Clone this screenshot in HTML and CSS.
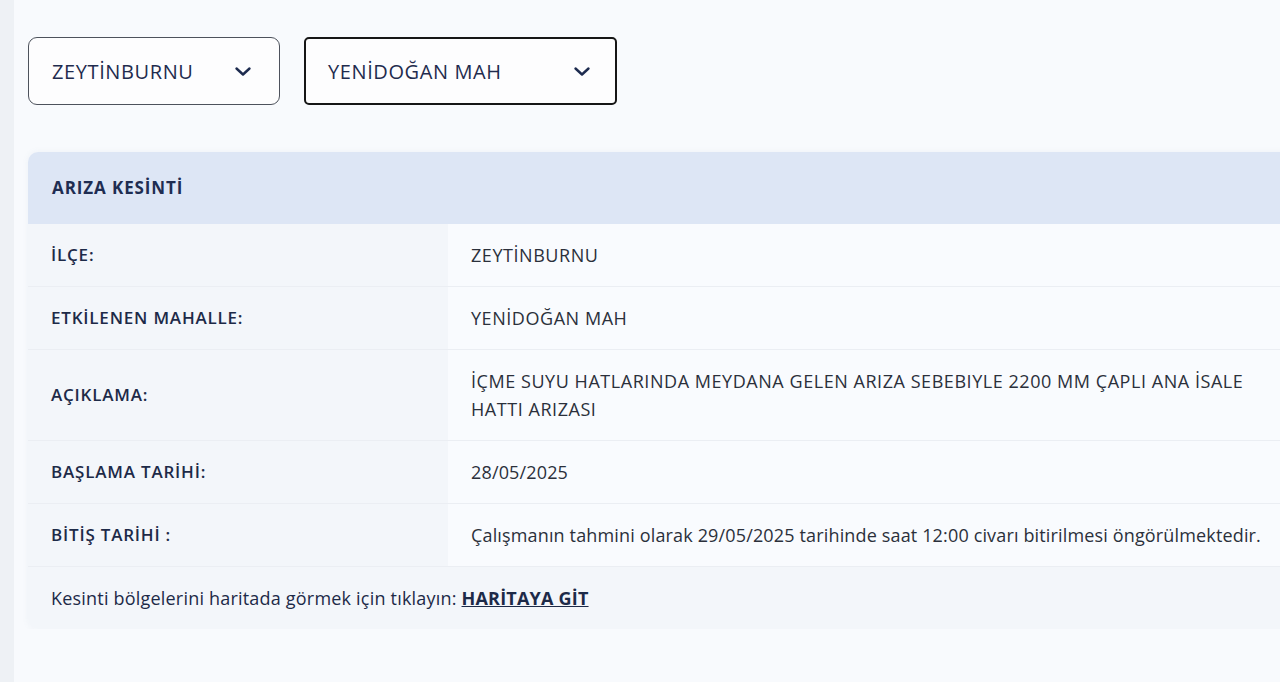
FILE: index.html
```html
<!DOCTYPE html>
<html lang="tr">
<head>
<meta charset="UTF-8">
<title>Arıza Kesinti</title>
<link rel="stylesheet" href="styles.css">
</head>
<body>
<div class="page">

  <div class="filters">
    <div class="select select-district">
      <span>ZEYTİNBURNU</span>
      <svg class="chevron" width="18" height="11" viewBox="0 0 18 11"><path d="M2.5 2.5l6.5 6 6.5-6" fill="none" stroke="#1d2b4f" stroke-width="2.4" stroke-linecap="round" stroke-linejoin="round"/></svg>
    </div>
    <div class="select select-area">
      <span>YENİDOĞAN MAH</span>
      <svg class="chevron" width="18" height="11" viewBox="0 0 18 11"><path d="M2.5 2.5l6.5 6 6.5-6" fill="none" stroke="#1d2b4f" stroke-width="2.4" stroke-linecap="round" stroke-linejoin="round"/></svg>
    </div>
  </div>

  <div class="card">
    <div class="card-head">ARIZA KESİNTİ</div>
    <div class="row">
      <div class="label">İLÇE:</div>
      <div class="value caps">ZEYTİNBURNU</div>
    </div>
    <div class="row">
      <div class="label">ETKİLENEN MAHALLE:</div>
      <div class="value caps">YENİDOĞAN MAH</div>
    </div>
    <div class="row">
      <div class="label">AÇIKLAMA:</div>
      <div class="value caps">İÇME SUYU HATLARINDA MEYDANA GELEN ARIZA SEBEBIYLE 2200 MM ÇAPLI ANA İSALE<br>HATTI ARIZASI</div>
    </div>
    <div class="row">
      <div class="label">BAŞLAMA TARİHİ:</div>
      <div class="value">28/05/2025</div>
    </div>
    <div class="row">
      <div class="label">BİTİŞ TARİHİ :</div>
      <div class="value">Çalışmanın tahmini olarak 29/05/2025 tarihinde saat 12:00 civarı bitirilmesi öngörülmektedir.</div>
    </div>
    <div class="card-foot">
      Kesinti bölgelerini haritada görmek için tıklayın: <a href="#">HARİTAYA GİT</a>
    </div>
  </div>

</div>
</body>
</html>
```

FILE: styles.css
```css
  body {
    margin: 0;
    padding: 0;
    font-family: "Open Sans", Lato, Arial, sans-serif;
    background: linear-gradient(to right, #eef1f5 14px, #f8fafd 14px);
    color: #1d2a48;
    overflow-x: hidden;
  }

  .page {
    padding: 37px 0 0 28px;
  }

  .filters {
    display: flex;
    gap: 24px;
  }

  .select {
    display: flex;
    align-items: center;
    justify-content: space-between;
    box-sizing: border-box;
    height: 68px;
    padding: 0 27px 0 23px;
    background-color: #fdfdfe;
    font-size: 20px;
    letter-spacing: 0.6px;
    color: #1f2c4e;
  }

  .select-district {
    width: 252px;
    border: 1px solid #4d525c;
    border-radius: 9px;
  }

  .select-area {
    width: 313px;
    border: 2px solid #161616;
    border-radius: 5px;
    padding-left: 22px;
    padding-right: 24px;
  }

  .chevron {
    display: block;
  }

  .card {
    margin-top: 47px;
    width: 1280px;
    border-radius: 10px;
    overflow: hidden;
    box-shadow: 0 0 6px rgba(120, 140, 170, 0.08);
  }

  .card-head {
    height: 72px;
    line-height: 72px;
    padding-left: 24px;
    background-color: #dde6f5;
    font-size: 17px;
    font-weight: 700;
    letter-spacing: 0.9px;
    color: #1e2d52;
  }

  .row {
    display: grid;
    grid-template-columns: 420px 1fr;
    border-bottom: 1px solid #ebeef3;
  }

  .row:first-of-type .label,
  .row:first-of-type .value {
    padding-top: 19px;
    padding-bottom: 18px;
  }

  .label,
  .value {
    display: flex;
    align-items: center;
    padding: 17px 23px;
    line-height: 28px;
  }

  .label {
    background-color: #f3f6fa;
    font-size: 17px;
    font-weight: 600;
    letter-spacing: 0.8px;
    color: #1d2a48;
  }

  .value {
    background-color: #f9fbfe;
    color: #2b303b;
    font-size: 18px;
    letter-spacing: 0.15px;
  }

  .value.caps {
    letter-spacing: 0.55px;
  }

  .card-foot {
    height: 62px;
    line-height: 62px;
    padding-left: 23px;
    background-color: #f3f6fa;
    font-size: 18px;
    letter-spacing: 0.2px;
    color: #1d2a48;
  }

  .card-foot a {
    font-weight: 700;
    color: #1d2a48;
  }
```
